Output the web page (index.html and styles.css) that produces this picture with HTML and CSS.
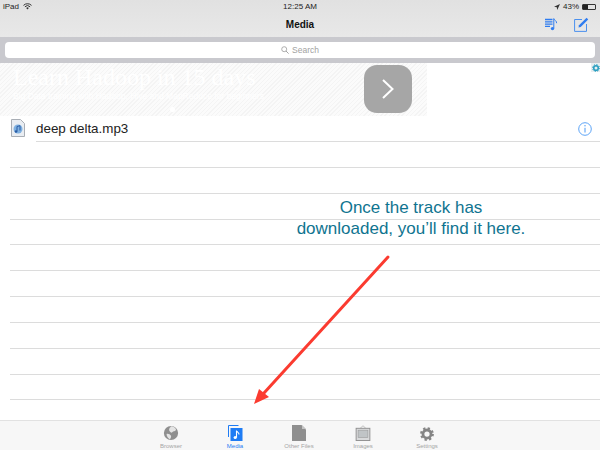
FILE: index.html
```html
<!DOCTYPE html>
<html lang="en">
<head>
    <meta charset="UTF-8">
    <title>Media</title>
    <link rel="stylesheet" href="styles.css">
</head>
<body>
    <div class="app">
        <header class="topbar">
            <div class="status">
                <div class="status-left">
                    <span>iPad</span>
                    <svg width="9" height="7" viewBox="0 0 9 7"><path d="M.5 2.4a5.6 5.6 0 0 1 8 0M1.9 3.8a3.6 3.6 0 0 1 5.2 0" fill="none" stroke="#333" stroke-width="1"/><path d="M3.2 5a1.8 1.8 0 0 1 2.6 0L4.5 6.6z" fill="#333"/></svg>
                </div>
                <div class="status-time">12:25 AM</div>
                <div class="status-right">
                    <svg width="6" height="6" viewBox="0 0 6 6"><path d="M6 0 0 2.8l2.8.4.4 2.8z" fill="#333"/></svg>
                    <span>43%</span>
                    <span class="battery"><span class="battery-level"></span></span>
                </div>
            </div>
            <div class="navbar">
                <h1>Media</h1>
                <div class="nav-actions">
                    <svg width="13" height="13" viewBox="0 0 13 13">
                        <path d="M0 1.5h7.5M0 3.8h7.5M0 6.1h7.5M0 8.4h5" stroke="#2f7cf0" stroke-width="1.3" fill="none"/>
                        <path d="M8.8 10.2V.6c.4 1.800 3 2 2.800 4.600" stroke="#2f7cf0" stroke-width="1" fill="none"/>
                        <circle cx="7.500" cy="10.600" r="1.700" fill="#2f7cf0"/>
                    </svg>
                    <svg width="15" height="15" viewBox="0 0 15 15">
                        <path d="M8 2.500H.6v11.900h11.900V7" fill="none" stroke="#4b90ee" stroke-width="1"/>
                        <path d="M4.500 10.500 5 8.300 12.600.8l1.600 1.600-7.500 7.600z" fill="#2f7cf0"/>
                    </svg>
                </div>
            </div>
        </header>

        <div class="searchbar">
            <div class="searchfield">
                <svg width="8" height="8" viewBox="0 0 8 8"><circle cx="3.200" cy="3.200" r="2.500" fill="none" stroke="#9a9a9a" stroke-width=".8"/><path d="M5 5l2.600 2.600" stroke="#9a9a9a" stroke-width=".9"/></svg>
                <span>Search</span>
            </div>
        </div>

        <div class="adrow">
            <div class="ad">
                <div class="ad-copy">
                    <div class="ad-title">Learn Hadoop in 15 days</div>
                    <div class="ad-sub">Big Data training with Hadoop, Hive and MapReduce for beginners</div>
                    <div class="ad-dots"><span></span></div>
                </div>
                <div class="ad-button">
                    <svg width="14" height="22" viewBox="0 0 14 22"><path d="M2 2l9.500 9L2 20" fill="none" stroke="#fff" stroke-width="2"/></svg>
                </div>
            </div>
            <div class="ad-badge">
                <svg width="8" height="8" viewBox="0 0 8 8"><circle cx="4" cy="4" r="2.300" fill="none" stroke="#2a9fc0" stroke-width="1.600"/><circle cx="4" cy="4" r="3.500" fill="none" stroke="#2a9fc0" stroke-width="1" stroke-dasharray="1.200 1.550"/></svg>
            </div>
        </div>

        <main class="tracks">
            <div class="track">
                <svg class="track-icon" width="14" height="18" viewBox="0 0 14 18">
                    <path d="M.5.500h9l4 4v13H.5z" fill="#e9edf2" stroke="#a9aeb5"/>
                    <circle cx="7" cy="10" r="4.500" fill="#7fb0e0"/>
                    <path d="M6 12.500V7.500l3-.8v4.800" fill="none" stroke="#2a5ca5" stroke-width="1"/>
                    <circle cx="5" cy="12.500" r="1.200" fill="#2a5ca5"/>
                </svg>
                <div class="track-line">
                    <span class="track-name">deep delta.mp3</span>
                    <svg class="track-info" width="14" height="14" viewBox="0 0 14 14"><circle cx="7" cy="7" r="6.300" fill="none" stroke="#4b9af5" stroke-width=".9"/><path d="M7 5.800v4.700" stroke="#4b9af5" stroke-width="1"/><circle cx="7" cy="3.800" r=".7" fill="#4b9af5"/></svg>
                </div>
            </div>
            <div class="empty-row"></div>
            <div class="empty-row"></div>
            <div class="empty-row"></div>
            <div class="empty-row"></div>
            <div class="empty-row"></div>
            <div class="empty-row"></div>
            <div class="empty-row"></div>
            <div class="empty-row"></div>
            <div class="empty-row"></div>
            <div class="empty-row"></div>
        </main>

        <nav class="tabbar">
            <a class="tab">
                <svg width="16" height="16" viewBox="0 0 18 18"><circle cx="9" cy="9" r="8" fill="#8f8f8f"/><path d="M9 1.500c2.500.5 4 1 5.500 3 .5 1.500-1 3-2.500 2.500-1.500.5-1.500 2-3 1.500C7.500 7.500 6.500 6 7 4.500 7.500 3 8.500 3 9 1.500zM4 10c2-.5 4 .5 5 2 .5 1.500-.5 3.500-1.500 4C5.500 15 4 12 4 10z" fill="#e4e4e4"/></svg>
                <span>Browser</span>
            </a>
            <a class="tab tab-active">
                <svg width="15" height="16" viewBox="0 0 15 16"><path d="M.5 12V.5h10" fill="none" stroke="#1f7cf4"/><rect x="2.500" y="3" width="12" height="13" fill="#1f7cf4"/><path d="M8.500 12.500V5.500c.3 1.500 2.800 2 2.500 4" fill="none" stroke="#fff" stroke-width="1.100"/><circle cx="7.200" cy="12.500" r="1.600" fill="#fff"/></svg>
                <span>Media</span>
            </a>
            <a class="tab">
                <svg width="14" height="16" viewBox="0 0 14 16"><path d="M0 0h9.500L14 4.500V16H0z" fill="#8f8f8f"/><path d="M10 0l4 4h-4z" fill="#c4c4c4"/></svg>
                <span>Other Files</span>
            </a>
            <a class="tab">
                <svg width="16" height="16" viewBox="0 0 16 17"><path d="M5 3.500 8 .8l3 2.700" fill="none" stroke="#a5a5a5" stroke-width=".7"/><rect x=".7" y="3.500" width="14.600" height="13" fill="#d9dadb" stroke="#8f8f8f"/><rect x="2.800" y="5.500" width="10.400" height="8" fill="#c0c4c6" stroke="#9a9a9a" stroke-width=".6"/></svg>
                <span>Images</span>
            </a>
            <a class="tab">
                <svg width="14" height="14" viewBox="0 0 16 16"><circle cx="8" cy="8" r="4.600" fill="none" stroke="#858585" stroke-width="3.200"/><circle cx="8" cy="8" r="6.600" fill="none" stroke="#858585" stroke-width="2.600" stroke-dasharray="2.600 2.580"/></svg>
                <span>Settings</span>
            </a>
        </nav>

        <p class="note">Once the track has<br>downloaded, you’ll find it here.</p>
        <svg class="arrow" width="150" height="160" viewBox="0 0 150 160">
            <path d="M137 5 13 141" stroke="#fb3b30" stroke-width="3" fill="none" stroke-linecap="round"/>
            <path d="M3 152 8 137 18 145z" fill="#fb3b30"/>
        </svg>
    </div>
</body>
</html>
```

FILE: styles.css
```css
* {
    margin: 0;
    padding: 0;
    box-sizing: border-box;
    font-family: "Liberation Sans", Arial, sans-serif;
}
body {
    background-color: #fff;
}
svg {
    display: block;
}
.app {
    position: relative;
    display: flex;
    flex-direction: column;
    width: 600px;
    height: 450px;
    overflow: hidden;
}
.topbar {
    height: 37px;
    background: linear-gradient(#e1e1e1, #e8e8e8);
    color: #222;
}
.status {
    display: flex;
    align-items: center;
    justify-content: space-between;
    height: 13px;
    padding: 0 3px 0 3px;
    font-size: 8px;
}
.status-left,
.status-right {
    display: flex;
    align-items: center;
    gap: 4px;
    width: 120px;
}
.status-right {
    justify-content: flex-end;
    gap: 3px;
    padding-right: 1px;
}
.battery {
    display: block;
    width: 14px;
    height: 6px;
    border: 1px solid #333;
    border-radius: 1px;
}
.battery-level {
    display: block;
    width: 5px;
    height: 4px;
    background-color: #222;
}
.navbar {
    position: relative;
    height: 24px;
    text-align: center;
}
.navbar h1 {
    font-size: 10px;
    line-height: 24px;
    color: #111;
}
.nav-actions {
    position: absolute;
    top: 4px;
    right: 11px;
    display: flex;
    align-items: center;
    gap: 16px;
}
.searchbar {
    height: 26px;
    padding: 5px 5px;
    background-color: #c9c9ce;
}
.searchfield {
    display: flex;
    align-items: center;
    justify-content: center;
    gap: 3px;
    height: 16px;
    background-color: #fff;
    border-radius: 4px;
    font-size: 8.5px;
    color: #a2a2a2;
}
.adrow {
    display: flex;
    justify-content: space-between;
    height: 53px;
}
.ad {
    display: flex;
    justify-content: space-between;
    width: 427px;
    padding: 2px 15px 0 13px;
    background: repeating-linear-gradient(135deg, #f4f4f4 0 1px, #fbfbfb 1px 3px);
}
.ad-copy {
    width: 318px;
    overflow: hidden;
    color: #fff;
    white-space: nowrap;
}
.ad-title {
    font-family: "Liberation Serif", serif;
    font-size: 24px;
    line-height: 25px;
}
.ad-sub {
    font-size: 8.5px;
    line-height: 11px;
    margin-top: 1px;
}
.ad-dots {
    display: flex;
    justify-content: center;
    margin-top: 5px;
}
.ad-dots span {
    width: 5px;
    height: 5px;
    border-radius: 50%;
    background-color: #fff;
}
.ad-button {
    display: flex;
    align-items: center;
    justify-content: center;
    width: 48px;
    height: 48px;
    background-color: #a6a6a6;
    border-radius: 13px;
}
.ad-badge {
    width: 9px;
    height: 9px;
    padding: 0.5px;
    background-color: #e8eef0;
}
.tracks {
    flex: 1;
}
.track {
    display: flex;
    height: 26px;
    padding-left: 11px;
}
.track-icon {
    margin-top: 3px;
}
.track-line {
    display: flex;
    flex: 1;
    align-items: center;
    justify-content: space-between;
    margin-left: 11px;
    padding-right: 8px;
    border-bottom: 1px solid #dcdcdc;
}
.track-name {
    font-size: 13.4px;
    color: #222;
}
.empty-row {
    height: 25.85px;
    margin-left: 10px;
    border-bottom: 1px solid #dcdcdc;
}
.tabbar {
    display: flex;
    justify-content: center;
    height: 30px;
    padding-right: 2px;
    background-color: #f7f7f7;
    border-top: 1px solid #e2e2e2;
}
.tab {
    display: flex;
    flex-direction: column;
    align-items: center;
    justify-content: flex-end;
    width: 64px;
    height: 28px;
    font-size: 6px;
    color: #a5a5a5;
}
.tab span {
    margin-top: 2px;
}
.tab-active {
    color: #1f7cf4;
}
.note {
    position: absolute;
    top: 197px;
    left: 276px;
    width: 270px;
    font-size: 17px;
    line-height: 21px;
    text-align: center;
    color: #0f7490;
}
.arrow {
    position: absolute;
    top: 252px;
    left: 251px;
}
```
